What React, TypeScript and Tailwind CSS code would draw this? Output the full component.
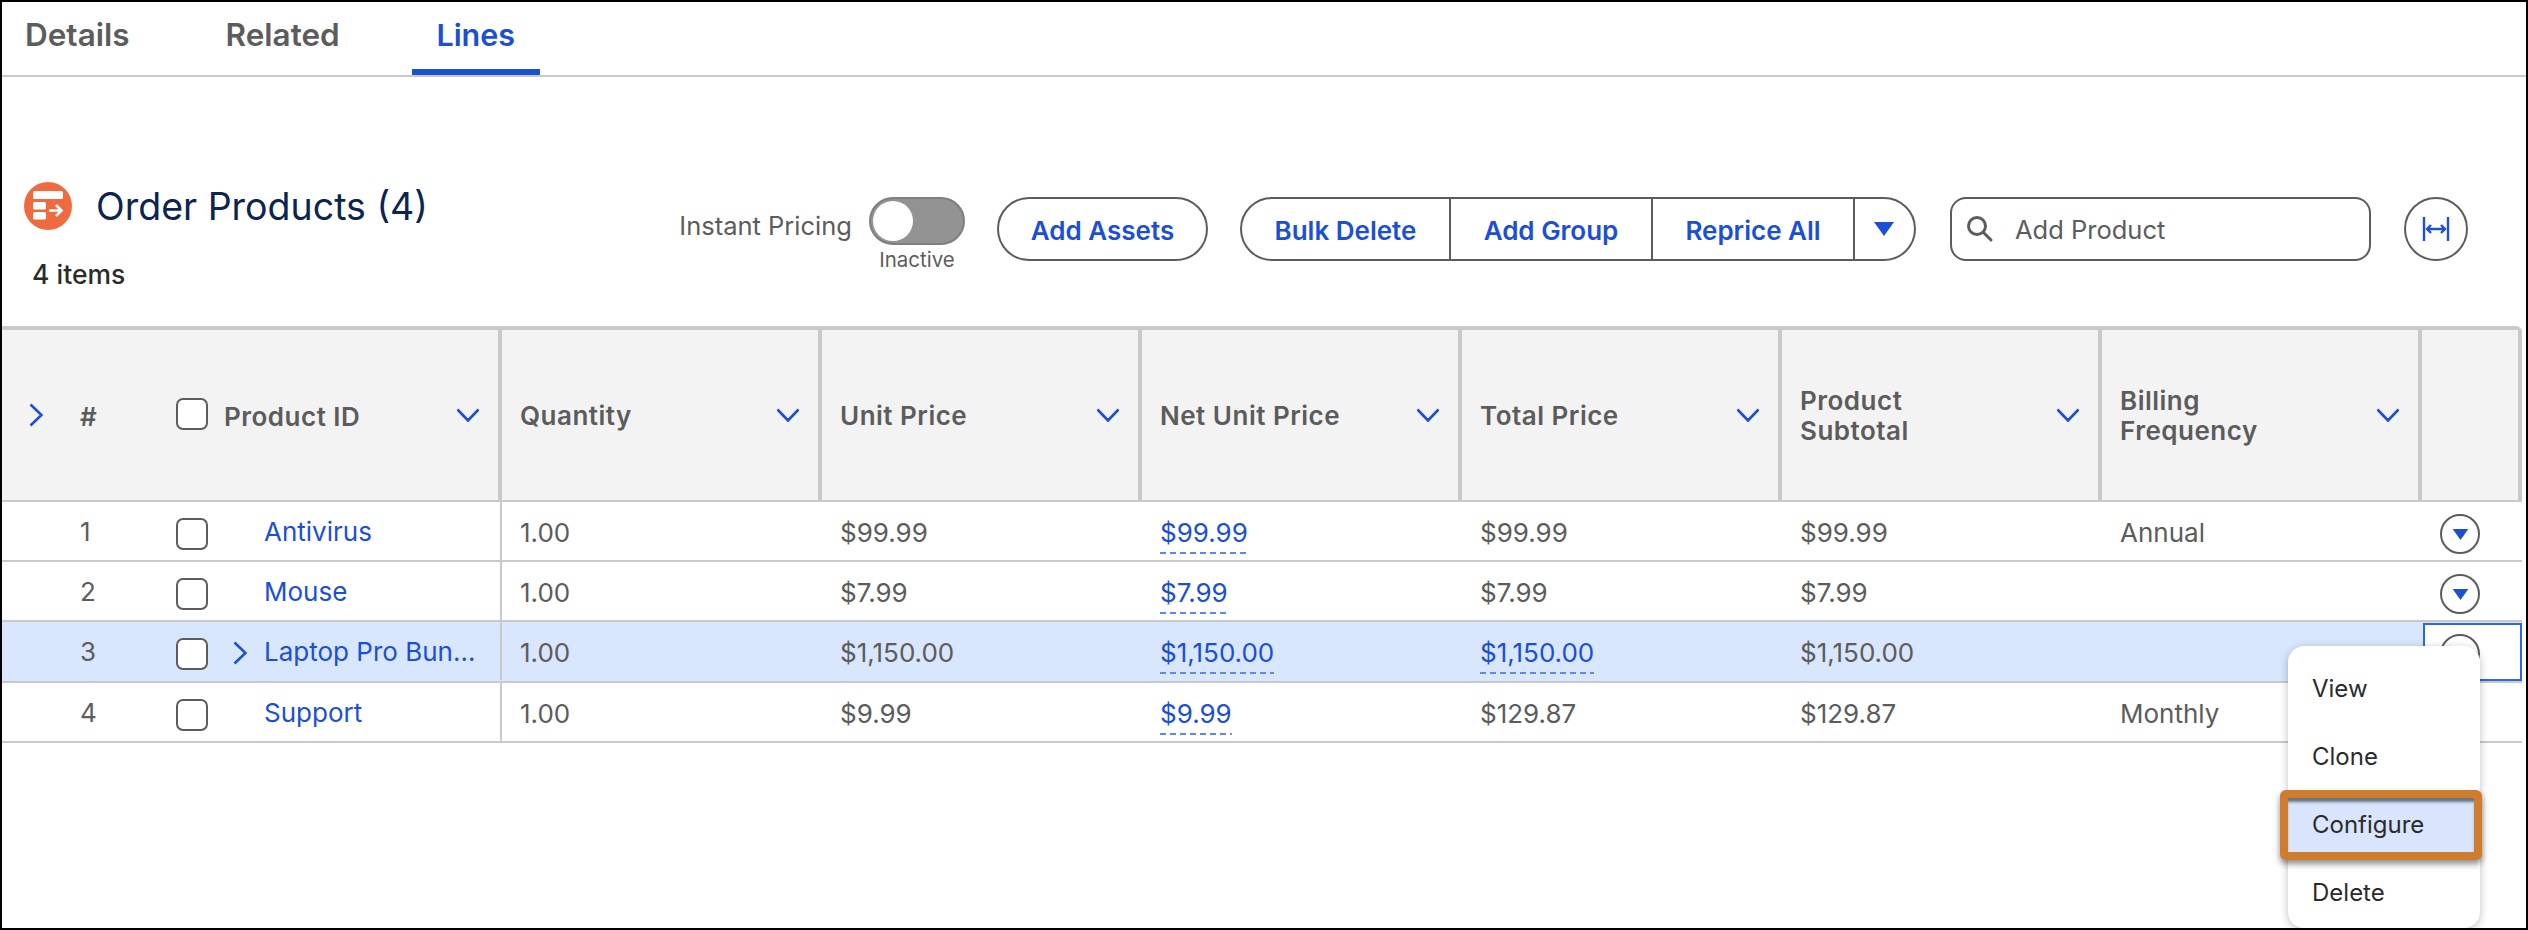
import type { ReactNode } from 'react'

const BLUE = '#1b4fd6'

function ChevronDown() {
  return (
    <svg width="24" height="14" viewBox="0 0 24 14" fill="none" className="shrink-0">
      <path d="M1.5 1.5 12 12.5 22.5 1.5" stroke={BLUE} strokeWidth="2.6" />
    </svg>
  )
}

function ChevronRight() {
  return (
    <svg width="14" height="24" viewBox="0 0 14 24" fill="none" className="shrink-0">
      <path d="M1.5 1.5 12.5 12 1.5 22.5" stroke={BLUE} strokeWidth="2.6" />
    </svg>
  )
}

function Triangle({ w = 20, h = 14 }: { w?: number; h?: number }) {
  return (
    <svg width={w} height={h} viewBox="0 0 20 14" className="shrink-0">
      <path d="M0 0H20L10 14Z" fill={BLUE} />
    </svg>
  )
}

function Checkbox() {
  return <div className="w-[32px] h-[32px] shrink-0 rounded-[7px] border-2 border-[#5c5c5c] bg-white" />
}

function RowAction() {
  return (
    <div className="w-[40px] h-[40px] rounded-full border-2 border-[#5c5c5c] bg-white flex items-center justify-center">
      <Triangle w={17} h={11} />
    </div>
  )
}

function HeaderCell({ children, last }: { children?: ReactNode; last?: boolean }) {
  return (
    <div className={`h-[170px] border-r-4 border-[#c9c9c9] flex items-center ${last ? '' : 'pl-[18px] pr-[18px]'}`}>
      {children && <div className="flex-1 pt-[2px] font-semibold text-[26px] leading-[30px] text-[#5c5c5c] tracking-[0.5px]">{children}</div>}
      {children && <ChevronDown />}
    </div>
  )
}

function Price({ value, link }: { value?: string; link?: boolean }) {
  return (
    <div className="pl-[18px] pt-[16px] h-[58px] text-[26px] leading-[29px]">
      {value && link ? (
        <div className="w-fit h-[36px] text-[#1b4fd6] bg-[repeating-linear-gradient(90deg,#5f86f5_0_6px,transparent_6px_10px)] bg-[length:100%_2px] bg-bottom bg-no-repeat">{value}</div>
      ) : value}
    </div>
  )
}

const rows = [
  { n: '1', name: 'Antivirus', unit: '$99.99', net: '$99.99', total: '$99.99', sub: '$99.99', freq: 'Annual' },
  { n: '2', name: 'Mouse', unit: '$7.99', net: '$7.99', total: '$7.99', sub: '$7.99', freq: '' },
  { n: '3', name: 'Laptop Pro Bun…', unit: '$1,150.00', net: '$1,150.00', total: '$1,150.00', sub: '$1,150.00', freq: '', selected: true },
  { n: '4', name: 'Support', unit: '$9.99', net: '$9.99', total: '$129.87', sub: '$129.87', freq: 'Monthly', noAction: true },
]

export default function App() {
  return (
    <div className="relative w-[2528px] h-[930px] overflow-hidden border-2 border-black bg-white text-[#5c5c5c] font-['Inter',sans-serif]">
      {/* tabs */}
      <div className="flex h-[75px] border-b-2 border-[#c9c9c9] text-[31.5px] leading-[36px] font-semibold">
        <div className="ml-[23px] pt-[15px]">Details</div>
        <div className="ml-[96px] pt-[15px]">Related</div>
        <div className="ml-[72px] w-[128px] text-center pt-[15px] h-[73px] text-[30.5px] text-[#1b4fd6] border-b-[6px] border-[#1b4fd6]">Lines</div>
      </div>

      {/* toolbar */}
      <div className="flex h-[249px] pr-[58px]">
        <div className="ml-[22px] mt-[105px]">
          <div className="flex items-start">
            <svg width="48" height="48" viewBox="0 0 48 48" className="shrink-0">
              <circle cx="24" cy="24" r="24" fill="#f06a3f" />
              <rect x="9" y="9" width="30" height="8" rx="1.5" fill="#fff" />
              <rect x="9" y="20" width="13" height="7.5" rx="1.5" fill="#fff" />
              <rect x="9" y="30" width="13" height="7.5" rx="1.5" fill="#fff" />
              <path d="M25 28.5H37M32 23l5.5 5.5L32 34" fill="none" stroke="#fff" strokeWidth="2.6" />
            </svg>
            <div className="ml-[24px] mt-[2px] text-[37.5px] leading-[46px] text-[#0b2550]">Order Products (4)</div>
          </div>
          <div className="ml-[8px] mt-[30px] text-[26.5px] leading-[29px] font-medium text-[#2b2b2b]">4 items</div>
        </div>

        <div className="ml-auto mt-[120px] flex items-start">
          <div className="mt-[14px] text-[25.5px] leading-[29px]">Instant Pricing</div>
          <div className="ml-[17px] w-[96px] flex flex-col items-center">
            <div className="w-[96px] h-[48px] rounded-full bg-[#939393] border-2 border-[#7f7f7f] flex items-center pl-[2px]">
              <div className="w-[40px] h-[40px] rounded-full bg-white" />
            </div>
            <div className="mt-[3px] text-[20.5px] leading-[24px]">Inactive</div>
          </div>
          <div className="ml-[32px] w-[211px] h-[64px] rounded-full border-2 border-[#5c5c5c] flex items-center justify-center pt-[2px] text-[26px] font-semibold text-[#1b4fd6]">Add Assets</div>
          <div className="ml-[32px] w-[676px] h-[64px] rounded-full border-2 border-[#5c5c5c] flex text-[26px] font-semibold text-[#1b4fd6] overflow-hidden">
            <div className="w-[209px] border-r-2 border-[#5c5c5c] flex items-center justify-center pt-[2px]">Bulk Delete</div>
            <div className="w-[202px] border-r-2 border-[#5c5c5c] flex items-center justify-center pt-[2px]">Add Group</div>
            <div className="w-[202px] border-r-2 border-[#5c5c5c] flex items-center justify-center pt-[2px]">Reprice All</div>
            <div className="flex-1 flex items-center justify-center pr-[2px]"><Triangle /></div>
          </div>
          <div className="ml-[34px] w-[421px] h-[64px] rounded-[16px] border-2 border-[#5c5c5c] flex items-center pl-[14px] text-[25.5px]">
            <svg width="28" height="28" viewBox="0 0 28 28" fill="none" className="shrink-0">
              <circle cx="11" cy="11" r="8.5" stroke="#5c5c5c" strokeWidth="3" />
              <path d="M17.5 17.5 25 25" stroke="#5c5c5c" strokeWidth="3" strokeLinecap="round" />
            </svg>
            <span className="ml-[21px] pt-[2px]">Add Product</span>
          </div>
          <div className="ml-[33px] w-[64px] h-[64px] rounded-full border-2 border-[#5c5c5c] flex items-center justify-center">
            <svg width="28" height="28" viewBox="0 0 28 28" fill="none">
              <path d="M2 2V26M26 2V26" stroke={BLUE} strokeWidth="2.4" />
              <path d="M5 14H23M9 10l-4 4 4 4M19 10l4 4-4 4" stroke={BLUE} strokeWidth="2.4" />
            </svg>
          </div>
        </div>
      </div>

      {/* table */}
      <div className="w-[2520px] border-t-4 border-[#c9c9c9] rounded-tr-[6px] grid grid-cols-[500px_repeat(6,320px)_100px]">
        <div className="col-span-full grid grid-cols-subgrid border-b-2 border-[#c9c9c9] bg-[#f3f3f3]">
          <div className="h-[170px] border-r-4 border-[#c9c9c9] flex items-center font-semibold text-[26px] pr-[18px]">
            <div className="w-[78px] pl-[27px]"><ChevronRight /></div>
            <div className="w-[96px] pt-[2px]">#</div>
            <div className="-mt-[3px]"><Checkbox /></div>
            <div className="ml-[16px] flex-1 pt-[2px] tracking-[0.5px]">Product ID</div>
            <ChevronDown />
          </div>
          <HeaderCell>Quantity</HeaderCell>
          <HeaderCell>Unit Price</HeaderCell>
          <HeaderCell>Net Unit Price</HeaderCell>
          <HeaderCell>Total Price</HeaderCell>
          <HeaderCell>Product<br />Subtotal</HeaderCell>
          <HeaderCell>Billing<br />Frequency</HeaderCell>
          <HeaderCell last />
        </div>

        {rows.map(r => (
          <div key={r.n} className={`col-span-full grid grid-cols-subgrid border-b-2 border-[#c9c9c9] ${r.selected ? 'bg-[#d8e6fe]' : ''}`}>
            <div className="h-[58px] border-r-2 border-[#c9c9c9] flex items-center text-[26px] pr-[12px]">
              <div className="w-[78px]" />
              <div className="w-[96px] pt-[1px]">{r.n}</div>
              <div className="mt-[5px]"><Checkbox /></div>
              <div className="w-[56px] pl-[25px] mt-[4px]">{r.selected && <ChevronRight />}</div>
              <div className="text-[#1b4fd6] whitespace-nowrap pt-[1px]">{r.name}</div>
            </div>
            <Price value="1.00" />
            <Price value={r.unit} />
            <Price value={r.net} link />
            <Price value={r.total} link={r.selected} />
            <Price value={r.sub} />
            <Price value={r.freq} />
            {r.selected ? (
              <div className="h-[58px] ml-px mt-px border-2 border-[#2a66ee] bg-white pl-[15px] pt-[9px]"><RowAction /></div>
            ) : (
              <div className="h-[58px] pl-[18px] pt-[12px]">{!r.noAction && <RowAction />}</div>
            )}
          </div>
        ))}
      </div>

      {/* row action menu, open on row 3 */}
      <div className="absolute left-[2286px] top-[644px] w-[192px] h-[282px] rounded-[16px] bg-white pt-[8px] shadow-[0_2px_8px_rgba(0,0,0,0.25)] text-[24px] text-[#2b2b2b]">
        <div className="h-[68px] flex items-center pl-[24px] pt-[2px]">View</div>
        <div className="h-[68px] flex items-center pl-[24px] pt-[2px]">Clone</div>
        <div className="relative h-[68px] flex items-center pl-[24px] pt-[2px]">
          <div className="absolute -left-[8px] -right-[2px] top-0 h-[70px] rounded-[6px] border-8 border-[#ce7c2d] bg-[#d8e5fc] shadow-[0_4px_6px_rgba(0,0,0,0.45),inset_0_5px_3px_-1px_rgba(0,0,0,0.5)]" />
          <span className="relative">Configure</span>
        </div>
        <div className="h-[68px] flex items-center pl-[24px] pt-[2px]">Delete</div>
      </div>
    </div>
  )
}
